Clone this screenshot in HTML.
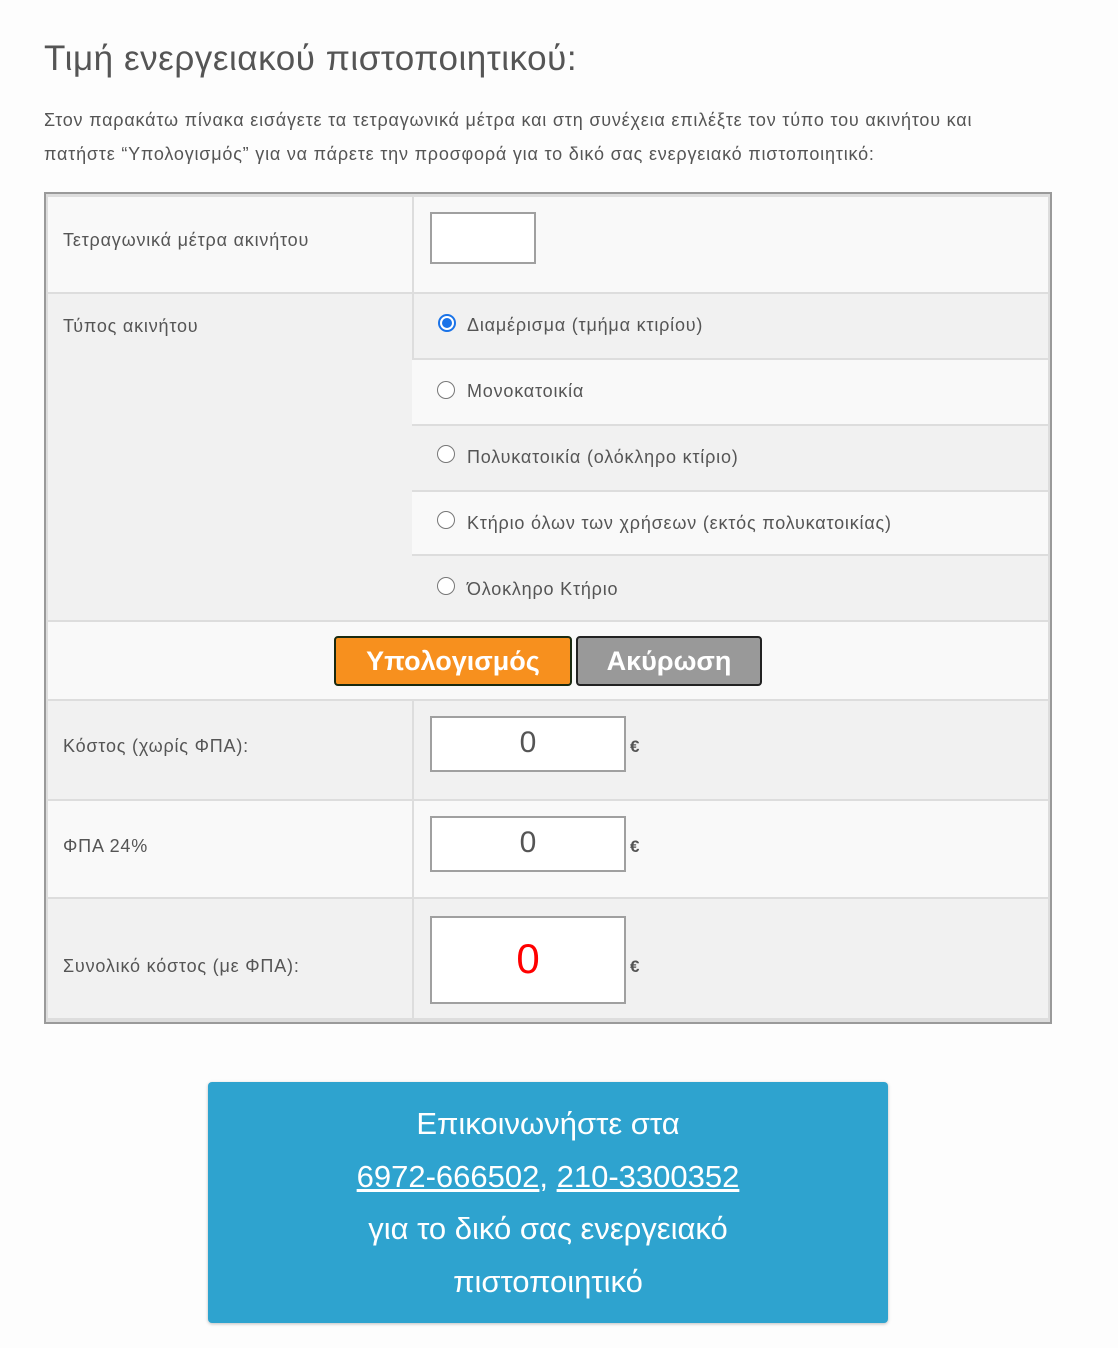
<!DOCTYPE html>
<html><head><meta charset="utf-8"><style>
*{margin:0;padding:0;box-sizing:border-box}
body{width:1118px;height:1348px;background:#fdfdfd;font-family:"Liberation Sans","DejaVu Sans",sans-serif;color:#555;position:relative;overflow:hidden}
.a{position:absolute;white-space:nowrap}
.bg{position:absolute}
.t{font-size:18px;letter-spacing:0.8px}
.radio{position:absolute;width:18px;height:18px;border:1.5px solid #777;border-radius:50%;background:#fff}
.inp{position:absolute;background:#fff;border:2px solid #a0a0a0}
</style></head><body>
<div class="a" style="left:44px;top:39px;font-size:35px;color:#555;letter-spacing:0.55px">Τιμή ενεργειακού πιστοποιητικού:</div>
<div class="a t" style="left:44px;top:110px">Στον παρακάτω πίνακα εισάγετε τα τετραγωνικά μέτρα και στη συνέχεια επιλέξτε τον τύπο του ακινήτου και</div>
<div class="a t" style="left:44px;top:144px">πατήστε “Υπολογισμός” για να πάρετε την προσφορά για το δικό σας ενεργειακό πιστοποιητικό:</div>

<div class="bg" style="left:44px;top:192px;width:1008px;height:832px;border:2px solid #9a9a9a;background:#ddd"></div>
<div class="bg" style="left:48px;top:197px;width:364px;height:95px;background:#f9f9f9"></div>
<div class="bg" style="left:414px;top:197px;width:634px;height:95px;background:#f9f9f9"></div>
<div class="bg" style="left:48px;top:294px;width:364px;height:326px;background:#f1f1f1"></div>
<div class="bg" style="left:414px;top:294px;width:634px;height:64px;background:#f1f1f1"></div>
<div class="bg" style="left:412px;top:360px;width:636px;height:64px;background:#f9f9f9"></div>
<div class="bg" style="left:412px;top:426px;width:636px;height:64px;background:#f1f1f1"></div>
<div class="bg" style="left:412px;top:492px;width:636px;height:62px;background:#f9f9f9"></div>
<div class="bg" style="left:412px;top:556px;width:636px;height:64px;background:#f1f1f1"></div>
<div class="bg" style="left:48px;top:622px;width:1000px;height:77px;background:#f9f9f9"></div>
<div class="bg" style="left:48px;top:701px;width:364px;height:98px;background:#f1f1f1"></div>
<div class="bg" style="left:414px;top:701px;width:634px;height:98px;background:#f1f1f1"></div>
<div class="bg" style="left:48px;top:801px;width:364px;height:96px;background:#f9f9f9"></div>
<div class="bg" style="left:414px;top:801px;width:634px;height:96px;background:#f9f9f9"></div>
<div class="bg" style="left:48px;top:899px;width:364px;height:119px;background:#f1f1f1"></div>
<div class="bg" style="left:414px;top:899px;width:634px;height:119px;background:#f1f1f1"></div>

<div class="a t" style="left:63px;top:230px">Τετραγωνικά μέτρα ακινήτου</div>
<div class="inp" style="left:430px;top:212px;width:106px;height:52px"></div>
<div class="a t" style="left:63px;top:316px">Τύπος ακινήτου</div>

<div class="radio" style="left:438px;top:314px;border:2px solid #1a73e8"><div style="position:absolute;left:2px;top:2px;width:10px;height:10px;border-radius:50%;background:#1a73e8"></div></div>
<div class="a t" style="left:467px;top:315px">Διαμέρισμα (τμήμα κτιρίου)</div>
<div class="radio" style="left:437px;top:381px"></div>
<div class="a t" style="left:467px;top:381px">Μονοκατοικία</div>
<div class="radio" style="left:437px;top:445px"></div>
<div class="a t" style="left:467px;top:447px">Πολυκατοικία (ολόκληρο κτίριο)</div>
<div class="radio" style="left:437px;top:511px"></div>
<div class="a t" style="left:467px;top:513px">Κτήριο όλων των χρήσεων (εκτός πολυκατοικίας)</div>
<div class="radio" style="left:437px;top:577px"></div>
<div class="a t" style="left:467px;top:579px">Όλοκληρο Κτήριο</div>

<div class="a" style="left:334px;top:636px;width:238px;height:50px;background:#f7901e;border:2px solid #1a2a10;border-radius:4px;color:#fff;font-weight:bold;font-size:27px;text-align:center;line-height:46px">Υπολογισμός</div>
<div class="a" style="left:576px;top:636px;width:186px;height:50px;background:#999;border:2px solid #222;border-radius:4px;color:#fff;font-weight:bold;font-size:27px;text-align:center;line-height:46px">Ακύρωση</div>

<div class="a t" style="left:63px;top:736px">Κόστος (χωρίς ΦΠΑ):</div>
<div class="inp" style="left:430px;top:716px;width:196px;height:56px;text-align:center;font-size:30px;line-height:50px;color:#555">0</div>
<div class="a" style="left:630px;top:737px;font-size:17px;font-weight:bold">€</div>
<div class="a t" style="left:63px;top:836px">ΦΠΑ 24%</div>
<div class="inp" style="left:430px;top:816px;width:196px;height:56px;text-align:center;font-size:30px;line-height:50px;color:#555">0</div>
<div class="a" style="left:630px;top:837px;font-size:17px;font-weight:bold">€</div>
<div class="a t" style="left:63px;top:956px">Συνολικό κόστος (με ΦΠΑ):</div>
<div class="inp" style="left:430px;top:916px;width:196px;height:88px;text-align:center;font-size:42px;line-height:82px;color:#f00">0</div>
<div class="a" style="left:630px;top:957px;font-size:17px;font-weight:bold">€</div>

<div class="bg" style="left:208px;top:1082px;width:680px;height:241px;background:#2ea3cf;border-radius:4px;box-shadow:0 1px 3px rgba(0,0,0,.25);color:#fff;text-align:center;font-size:31px;line-height:52.5px;padding-top:16px">
Επικοινωνήστε στα<br><span style="text-decoration:underline">6972-666502</span>, <span style="text-decoration:underline">210-3300352</span><br>για το δικό σας ενεργειακό<br>πιστοποιητικό</div>
</body></html>
